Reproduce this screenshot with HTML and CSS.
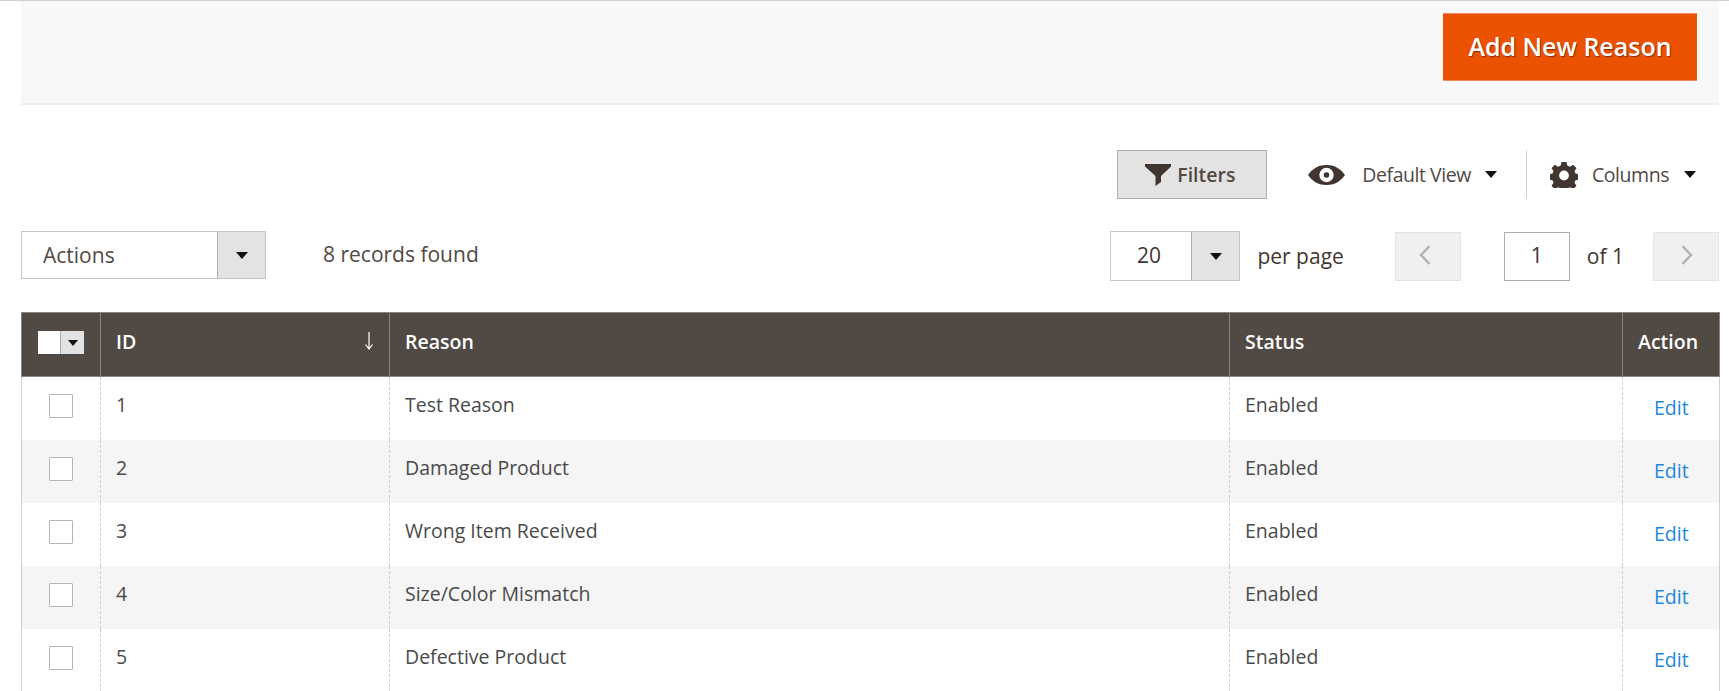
FILE: index.html
```html
<!DOCTYPE html>
<html lang="en">
<head>
<meta charset="utf-8">
<title>Reasons</title>
<link rel="stylesheet" href="styles.css">
</head>
<body>
<div class="page">
  <div class="page-actions"><button class="btn-primary">Add New Reason</button></div>

  <div class="controls">
    <button class="btn-filters">
      <svg class="ico-filter" viewBox="0 0 26 22"><path d="M0 0h26v2.500L16 12v6l-5.500 4V12L0 2.500z"/></svg>
      Filters
    </button>
    <div class="ctl ctl-view">
      <svg class="ico-eye" viewBox="0 0 37 20"><path fill-rule="evenodd" d="M18.500 0C28 0 33.500 5 37 10c-3.500 5-9 10-18.500 10S3.500 15 0 10C3.500 5 9 0 18.500 0zm0 2.800a7.200 7.200 0 1 0 0 14.400 7.200 7.200 0 0 0 0-14.400zm0 4.400a2.800 2.800 0 1 1 0 5.600 2.800 2.800 0 0 1 0-5.600z"/></svg>
      <span class="ctl-label">Default View</span>
      <span class="caret"></span>
    </div>
    <div class="ctl ctl-cols">
      <svg class="ico-gear" viewBox="0 0 28 26"><path fill-rule="evenodd" d="M11.500 0h5l.8 3.600 2.600 1.100 3.300-2 3.300 3.400-2 3.100 1 2.400 3.500.9v4.900l-3.500.9-1 2.400 2 3.100-3.300 3.400-3.300-2-2.600 1.100-.8 2.600h-5l-.8-2.600-2.600-1.100-3.300 2-3.300-3.400 2-3.100-1-2.400-3.500-.9v-4.900l3.500-.9 1-2.400-2-3.100 3.300-3.400 3.300 2 2.600-1.100zM14 8.600a4.900 4.900 0 1 0 0 9.800 4.900 4.900 0 0 0 0-9.800z"/></svg>
      <span class="ctl-label">Columns</span>
      <span class="caret"></span>
    </div>
  </div>

  <div class="toolbar">
    <div class="select select-actions">
      <span class="select-value">Actions</span>
      <span class="select-btn"><span class="caret"></span></span>
    </div>
    <span class="records">8 records found</span>
    <div class="pager">
      <div class="select select-size">
        <span class="select-value">20</span>
        <span class="select-btn"><span class="caret"></span></span>
      </div>
      <span class="per-page">per page</span>
      <span class="page-btn page-prev"><svg class="chev" viewBox="0 0 12 20"><path d="M10.500 1 2 10l8.500 9"/></svg></span>
      <span class="page-input">1</span>
      <span class="page-of">of 1</span>
      <span class="page-btn page-next"><svg class="chev" viewBox="0 0 12 20"><path d="M1.500 1 10 10l-8.500 9"/></svg></span>
    </div>
  </div>

  <table class="grid">
    <colgroup>
      <col class="c-check"><col class="c-id"><col class="c-reason"><col class="c-status"><col class="c-action">
    </colgroup>
    <thead>
      <tr>
        <th><span class="mass"><span class="mass-box"></span><span class="mass-btn"><span class="caret caret-sm"></span></span></span></th>
        <th><span class="th-sort">ID<svg class="ico-sort" viewBox="0 0 10 18"><path d="M5 0v16M1.500 12.500 5 17l3.500-4.500"/></svg></span></th>
        <th>Reason</th>
        <th>Status</th>
        <th>Action</th>
      </tr>
    </thead>
    <tbody>
      <tr><td class="cell-check"><span class="check"></span></td><td>1</td><td>Test Reason</td><td>Enabled</td><td class="cell-action"><a href="#">Edit</a></td></tr>
      <tr><td class="cell-check"><span class="check"></span></td><td>2</td><td>Damaged Product</td><td>Enabled</td><td class="cell-action"><a href="#">Edit</a></td></tr>
      <tr><td class="cell-check"><span class="check"></span></td><td>3</td><td>Wrong Item Received</td><td>Enabled</td><td class="cell-action"><a href="#">Edit</a></td></tr>
      <tr><td class="cell-check"><span class="check"></span></td><td>4</td><td>Size/Color Mismatch</td><td>Enabled</td><td class="cell-action"><a href="#">Edit</a></td></tr>
      <tr><td class="cell-check"><span class="check"></span></td><td>5</td><td>Defective Product</td><td>Enabled</td><td class="cell-action"><a href="#">Edit</a></td></tr>
    </tbody>
  </table>
</div>
</body>
</html>
```

FILE: styles.css
```css
* { box-sizing: border-box; }
html, body { margin: 0; padding: 0; height: 100%; overflow: hidden; background: #fff; }
body {
  font-family: "Open Sans", "Noto Sans", sans-serif;
  font-size: 21px;
  color: #41362f;
  border-top: 1px solid #d0d0d0;
}
.page { padding: 0 10px 0 21px; }

.page-actions {
  display: flex;
  justify-content: flex-end;
  height: 104px;
  padding: 12px 22px 0 0;
  background: #f8f8f8;
  border-bottom: 2px solid #eeeeee;
}
.btn-primary {
  width: 254px;
  height: 68px;
  padding: 0 0 2px;
  font: 600 25px "Open Sans", sans-serif;
  color: #fff;
  background: #eb5202;
  border: 0;
  border-top: 1px solid #f28a5c;
  border-bottom: 1px solid #f28a5c;
  text-shadow: 1px 1px 1px rgba(0, 0, 0, .45);
}

.controls {
  display: flex;
  align-items: center;
  justify-content: flex-end;
  height: 49px;
  margin-top: 45px;
  padding-right: 23px;
}
.btn-filters {
  display: flex;
  align-items: center;
  justify-content: center;
  gap: 6px;
  width: 150px;
  height: 49px;
  padding: 0 4px 0 0;
  font: 600 19.500px "Open Sans", sans-serif;
  color: #514943;
  background: #e3e3e3;
  border: 1px solid #adadad;
}
.ico-filter { width: 26px; height: 22px; fill: #41362f; }
.ctl {
  display: flex;
  align-items: center;
  height: 49px;
  font-size: 19.500px;
  letter-spacing: -.45px;
  color: #514943;
}
.ctl-view { margin-left: 41px; padding-right: 29px; border-right: 1px solid #d0d0d0; }
.ctl-cols { padding-left: 23px; }
.ico-eye { width: 37px; height: 20px; fill: #41362f; margin-right: 17px; }
.ico-gear { width: 28px; height: 26px; fill: #41362f; margin-right: 14px; }
.ctl-label { margin-right: 14px; }
.ctl-cols .ctl-label { margin-right: 15px; }
.caret {
  display: inline-block;
  width: 0;
  height: 0;
  border-left: 6px solid transparent;
  border-right: 6px solid transparent;
  border-top: 7px solid #111;
}
.caret-sm { border-left-width: 5px; border-right-width: 5px; border-top-width: 6px; }

.toolbar {
  display: flex;
  align-items: flex-start;
  height: 50px;
  margin-top: 32px;
}
.select {
  display: flex;
  background: #fff;
  border: 1px solid #c6c6c6;
}
.select-actions { width: 245px; height: 48px; }
.select-size { width: 130px; height: 50px; }
.select-actions .select-value { flex: 1; padding-left: 21px; line-height: 46px; color: #514943; }
.select-size .select-value { flex: 1; padding-right: 5px; line-height: 46px; text-align: center; }
.select-btn {
  display: flex;
  align-items: center;
  justify-content: center;
  width: 48px;
  background: #e3e3e3;
  border-left: 1px solid #adadad;
}
.records { margin-left: 57px; line-height: 46px; color: #514943; }
.pager { display: flex; align-items: center; height: 50px; margin-left: auto; color: #41362f; }
.per-page { margin-left: 17px; }
.page-btn {
  display: flex;
  align-items: center;
  justify-content: center;
  width: 66px;
  height: 49px;
  margin-top: 1px;
  padding-bottom: 4px;
  background: #f0f0f0;
  border: 1px solid #e3e3e3;
}
.page-prev { margin-left: 51px; padding-right: 6px; }
.page-next { margin-left: 29px; padding-left: 2px; }
.chev { width: 12px; height: 20px; fill: none; stroke: #b0b0b0; stroke-width: 2.200; }
.page-input {
  width: 66px;
  height: 49px;
  margin: 1px 0 0 43px;
  line-height: 45px;
  text-align: center;
  background: #fff;
  border: 1px solid #adadad;
}
.page-of { margin-left: 17px; }

.grid {
  width: 1698px;
  margin-top: 31px;
  table-layout: fixed;
  border-collapse: collapse;
}
.c-check { width: 79px; }
.c-id { width: 289px; }
.c-reason { width: 840px; }
.c-status { width: 393px; }
.c-action { width: 97px; }
.grid th {
  height: 64px;
  padding: 0 16px 7px 15px;
  font-size: 19.500px;
  font-weight: 600;
  text-align: left;
  color: #fff;
  background: #514943;
  border: 1px solid #8a837f;
}
.grid td {
  height: 63px;
  padding: 13px 16px 0 15px;
  vertical-align: top;
  font-size: 19.500px;
  line-height: 30px;
  color: #4a4a4a;
  border-left: 1px dashed #d0d0d0;
  border-right: 1px dashed #d0d0d0;
}
.grid tbody tr:nth-child(even) td { background: #f5f5f5; }
.grid td:first-child { border-left: 1px solid #d0d0d0; }
.grid td:last-child { border-right: 1px solid #d0d0d0; }
.grid th:last-child { padding-left: 15px; }
.th-sort { display: flex; align-items: center; justify-content: space-between; margin-right: -1px; }
.ico-sort { width: 10px; height: 18px; fill: none; stroke: #fff; stroke-width: 1.200; }
.mass { display: flex; width: 46px; height: 23px; }
.mass-box { width: 22px; background: #fff; }
.mass-btn {
  display: flex;
  align-items: center;
  justify-content: center;
  width: 24px;
  background: #e3e3e3;
  border-left: 1px solid #adadad;
}
.grid th:first-child { padding: 0 0 4px 16px; }
.grid td.cell-check { padding: 17px 0 0 27px; }
.check {
  display: block;
  width: 24px;
  height: 24px;
  background: #fff;
  border: 1px solid #b5b5b5;
  border-radius: 1px;
}
.grid td.cell-action { padding: 16px 0 0 31px; }
.cell-action a { color: #1e88db; text-decoration: none; }
```
